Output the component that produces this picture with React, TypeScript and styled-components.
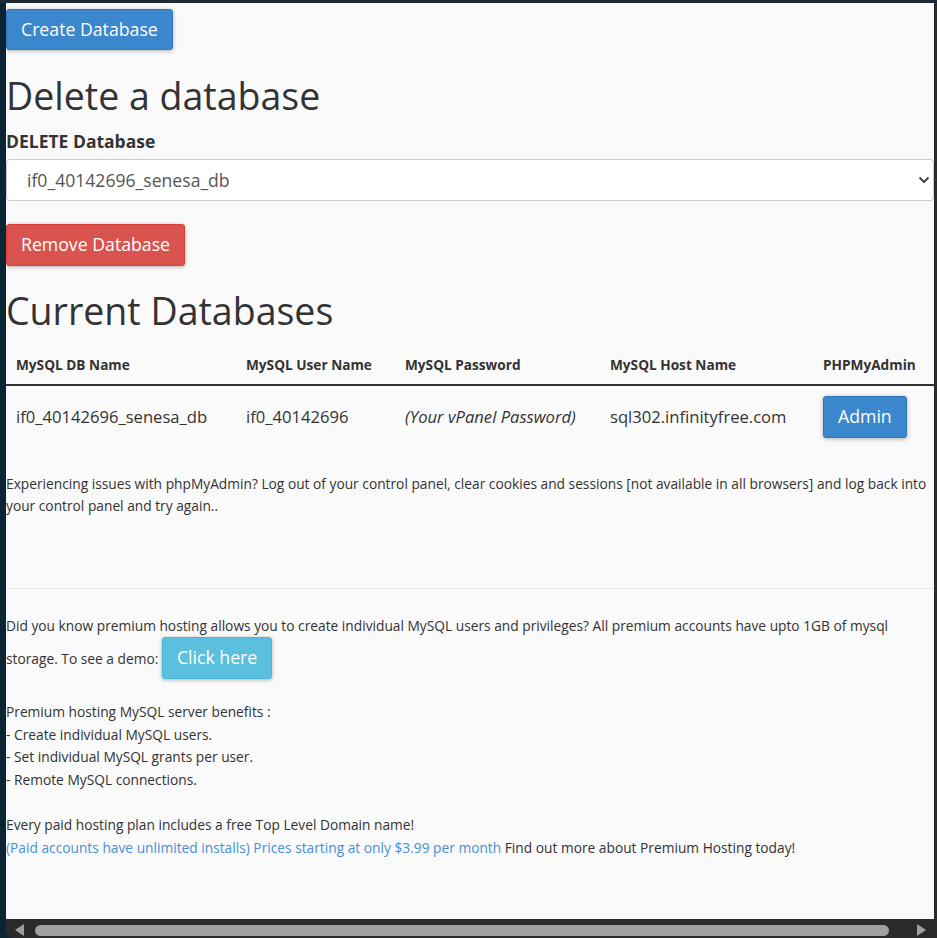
import styled, { createGlobalStyle } from 'styled-components'

const GlobalStyle = createGlobalStyle`
  html, body {
    margin: 0;
    padding: 0;
  }
  body {
    font-family: "Open Sans", "Liberation Sans", sans-serif;
    font-size: 13.75px;
    line-height: 22.6px;
    color: #333;
    background: #0c2535;
  }
  * {
    box-sizing: border-box;
  }
`

const variants = {
  primary: { bg: '#3a87cd', border: '#2f77b9' },
  danger: { bg: '#d9534f', border: '#d43f3a' },
  info: { bg: '#5bc0de', border: '#46b8da' },
}

type Variant = keyof typeof variants

const columns = [
  { title: 'MySQL DB Name', width: 230 },
  { title: 'MySQL User Name', width: 159 },
  { title: 'MySQL Password', width: 205 },
  { title: 'MySQL Host Name', width: 213 },
  { title: 'PHPMyAdmin', width: 121 },
]

const databases = [
  {
    name: 'if0_40142696_senesa_db',
    user: 'if0_40142696',
    password: '(Your vPanel Password)',
    host: 'sql302.infinityfree.com',
  },
]

const App = () => {
  return (
    <>
      <GlobalStyle />
      <Window>
        <Pane>
          <Content>
            <Button $variant='primary'>Create Database</Button>

            <Heading>Delete a database</Heading>
            <Label htmlFor='delete-db'>DELETE Database</Label>
            <SelectWrap>
              <Select id='delete-db' defaultValue={databases[0].name}>
                {databases.map((db) => (
                  <option key={db.name} value={db.name}>{db.name}</option>
                ))}
              </Select>
              <Chevron width='12' height='8' viewBox='0 0 12 8'>
                <path d='M1.5 1.5 L6 6 L10.5 1.5' fill='none' stroke='#444' strokeWidth='2' />
              </Chevron>
            </SelectWrap>
            <Button $variant='danger'>Remove Database</Button>

            <Heading>Current Databases</Heading>
            <Table>
              <colgroup>
                {columns.map((c) => (
                  <col key={c.title} style={{ width: c.width }} />
                ))}
              </colgroup>
              <thead>
                <tr>
                  {columns.map((c) => (
                    <Th key={c.title}>{c.title}</Th>
                  ))}
                </tr>
              </thead>
              <tbody>
                {databases.map((db) => (
                  <tr key={db.name}>
                    <Td>{db.name}</Td>
                    <Td>{db.user}</Td>
                    <Td><em>{db.password}</em></Td>
                    <Td>{db.host}</Td>
                    <Td><Button $variant='primary'>Admin</Button></Td>
                  </tr>
                ))}
              </tbody>
            </Table>

            <Paragraph>
              Experiencing issues with phpMyAdmin? Log out of your control panel, clear cookies and sessions [not available in all browsers] and log back into your control panel and try again..
            </Paragraph>

            <Divider />

            <Paragraph>
              Did you know premium hosting allows you to create individual MySQL users and privileges? All premium accounts have upto 1GB of mysql storage. To see a demo: <Button $variant='info'>Click here</Button>
            </Paragraph>

            <Paragraph>
              Premium hosting MySQL server benefits :<br />
              - Create individual MySQL users.<br />
              - Set individual MySQL grants per user.<br />
              - Remote MySQL connections.
            </Paragraph>

            <Paragraph>
              Every paid hosting plan includes a free Top Level Domain name!<br />
              <Link href='#'>(Paid accounts have unlimited installs) Prices starting at only $3.99 per month</Link> Find out more about Premium Hosting today!
            </Paragraph>
          </Content>

          <Scrollbar>
            <ArrowLeft />
            <Thumb />
            <ArrowRight />
          </Scrollbar>
        </Pane>
      </Window>
    </>
  )
}

export default App

const Window = styled.div`
  width: 937px;
  height: 938px;
  display: flex;
  flex-direction: column;
  border-top: 3px solid #1e2a33;
  background: #0c2535;
`

const Pane = styled.div`
  flex: 1;
  min-height: 0;
  margin-left: 6px;
  display: flex;
  flex-direction: column;
  background: #2b2b2b;
  border-bottom-left-radius: 8px;
  overflow: hidden;
`

const Content = styled.div`
  flex: 1;
  min-height: 0;
  overflow: hidden;
  margin-right: 3px;
  padding-top: 6px;
  background: #fafafa;
`

const Button = styled.button<{ $variant: Variant }>`
  display: inline-block;
  font-family: inherit;
  font-size: 17.7px;
  line-height: 1.2;
  padding: 9px 14px;
  color: #fff;
  background: ${(p) => variants[p.$variant].bg};
  border: 1px solid ${(p) => variants[p.$variant].border};
  border-radius: 3px;
  box-shadow: 0 1px 4px rgba(0, 0, 0, 0.3);
  cursor: pointer;
`

const Heading = styled.h1`
  font-size: 37.5px;
  font-weight: 400;
  line-height: 1.1;
  margin: 24.5px 0 14.5px;
`

const Label = styled.label`
  display: block;
  font-size: 17.5px;
  font-weight: 700;
  line-height: 22.4px;
  margin-bottom: 6.5px;
`

const SelectWrap = styled.div`
  position: relative;
  margin-bottom: 23px;
`

const Select = styled.select`
  display: block;
  width: 100%;
  height: 42px;
  appearance: none;
  background: #fff;
  border: 1px solid #ccc;
  border-radius: 4px;
  padding: 0 40px 0 20px;
  font-family: inherit;
  font-size: 17.6px;
  color: #555;
  outline: none;
`

const Chevron = styled.svg`
  position: absolute;
  right: 4px;
  top: 17px;
  pointer-events: none;
`

const Table = styled.table`
  width: 100%;
  table-layout: fixed;
  border-collapse: collapse;
  margin-bottom: 25px;
`

const Th = styled.th`
  text-align: left;
  font-size: 13.65px;
  font-weight: 700;
  line-height: 22.4px;
  padding: 8px 10px;
  border-bottom: 2px solid #333;
  white-space: nowrap;
`

const Td = styled.td`
  font-size: 16.6px;
  line-height: 22.4px;
  padding: 10px;
  vertical-align: middle;
  white-space: nowrap;

  em {
    font-style: italic;
  }
`

const Paragraph = styled.p`
  margin: 0 0 22.5px;
`

const Divider = styled.hr`
  border: 0;
  border-top: 1px solid #e8e8e8;
  margin: 70px 0 26px;
`

const Link = styled.a`
  color: #4790d6;
  text-decoration: none;
`

const Scrollbar = styled.div`
  height: 19px;
  flex-shrink: 0;
  display: flex;
  align-items: center;
  padding-top: 3px;
`

const ArrowLeft = styled.div`
  width: 0;
  height: 0;
  margin-left: 9px;
  border-top: 6px solid transparent;
  border-bottom: 6px solid transparent;
  border-right: 9px solid #9e9e9e;
`

const Thumb = styled.div`
  flex: 1;
  height: 11px;
  margin: 0 28px 0 11px;
  border-radius: 6px;
  background: #a0a0a0;
`

const ArrowRight = styled.div`
  width: 0;
  height: 0;
  margin-right: 11px;
  border-top: 6px solid transparent;
  border-bottom: 6px solid transparent;
  border-left: 9px solid #9e9e9e;
`
